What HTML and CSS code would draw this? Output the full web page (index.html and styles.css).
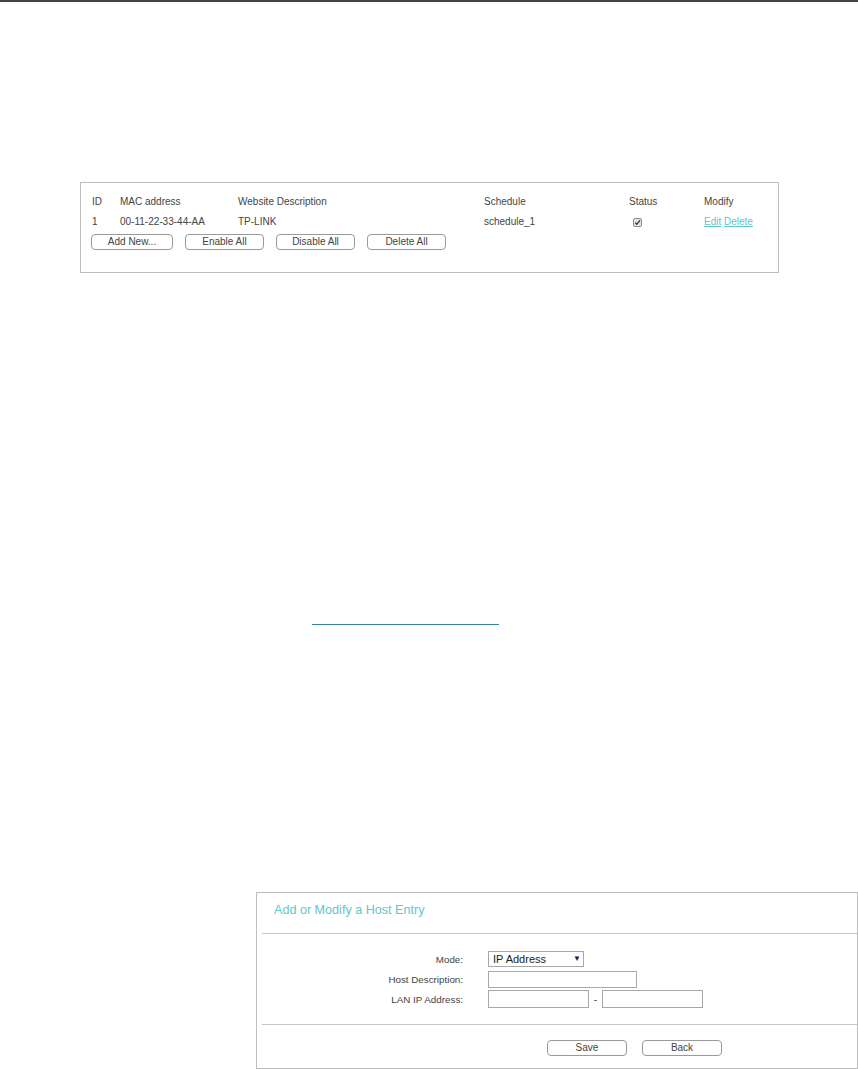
FILE: index.html
```html
<!DOCTYPE html>
<html lang="en">
<head>
    <meta charset="UTF-8">
    <meta name="viewport" content="width=device-width, initial-scale=1.0">
    <title>Access Control - Host</title>
    <link rel="stylesheet" href="styles.css">
</head>
<body>
    <div class="list-panel">
        <div class="list-grid">
            <div>ID</div>
            <div>MAC address</div>
            <div>Website Description</div>
            <div>Schedule</div>
            <div>Status</div>
            <div>Modify</div>

            <div>1</div>
            <div>00-11-22-33-44-AA</div>
            <div>TP-LINK</div>
            <div>schedule_1</div>
            <div class="status-cell">
                <svg class="check" width="9" height="9" viewBox="0 0 9 9">
                    <rect x="0.5" y="0.5" width="8" height="8" rx="1.5" fill="#e4e4e4" stroke="#8c8c8c"/>
                    <path d="M2.2 4.6 L3.8 6.3 L6.9 2.4" fill="none" stroke="#333" stroke-width="1.3"/>
                </svg>
            </div>
            <div class="modify-cell"><a href="#">Edit</a> <a href="#">Delete</a></div>
        </div>
        <div class="btn-row">
            <button class="btn">Add New...</button>
            <button class="btn">Enable All</button>
            <button class="btn">Disable All</button>
            <button class="btn">Delete All</button>
        </div>
    </div>

    <div class="ref-link"></div>

    <div class="host-panel">
        <div class="host-title">Add or Modify a Host Entry</div>
        <div class="host-divider"></div>
        <div class="host-form">
            <div class="form-row">
                <label class="form-label">Mode:</label>
                <div class="fake-select">IP Address<span class="arrow">&#9660;</span></div>
            </div>
            <div class="form-row">
                <label class="form-label">Host Description:</label>
                <input class="text-input wide" type="text">
            </div>
            <div class="form-row">
                <label class="form-label">LAN IP Address:</label>
                <input class="text-input ip" type="text">
                <span class="dash">-</span>
                <input class="text-input ip" type="text">
            </div>
        </div>
        <div class="host-divider"></div>
        <div class="host-actions">
            <button class="btn action">Save</button>
            <button class="btn action">Back</button>
        </div>
    </div>
</body>
</html>
```

FILE: styles.css
```css
:root {
    --text-color: #444;
    --teal: #62c6ca;
    --panel-border: #bdbdbd;
    --btn-border: #9a9a9a;
}

body {
    margin: 0;
    border-top: 2px solid #444;
    font-family: "Liberation Sans", Arial, sans-serif;
    font-size: 10px;
    color: var(--text-color);
    background: #fff;
}

/* host list panel */
.list-panel {
    box-sizing: border-box;
    margin: 180px 0 0 80px;
    width: 699px;
    height: 91px;
    border: 1px solid var(--panel-border);
    padding: 9px 0 0 11px;
}

.list-grid {
    display: grid;
    grid-template-columns: 28px 118px 246px 145px 75px auto;
    line-height: 20px;
}

.status-cell {
    display: flex;
    align-items: center;
    padding-left: 4px;
}

.check {
    display: block;
}

.modify-cell a {
    color: var(--teal);
    text-decoration: underline;
}

.btn-row {
    display: flex;
    gap: 12px;
    margin: 2px 0 0 -1px;
}

.btn {
    box-sizing: border-box;
    width: 79px;
    height: 16px;
    padding: 0;
    border: 1px solid var(--btn-border);
    border-radius: 4px;
    background: #fff;
    font-family: "Liberation Sans", Arial, sans-serif;
    font-size: 10px;
    color: var(--text-color);
    line-height: 14px;
    cursor: pointer;
}

.btn-row .btn:first-child {
    width: 82px;
}

/* stray link underline */
.ref-link {
    margin: 351px 0 0 312px;
    width: 187px;
    height: 1px;
    background: #35899b;
}

/* add / modify panel */
.host-panel {
    box-sizing: border-box;
    margin: 267px 0 0 256px;
    width: 602px;
    height: 177px;
    border: 1px solid var(--panel-border);
}

.host-title {
    padding: 7px 0 13px 17px;
    line-height: 20px;
    font-size: 12.6px;
    color: var(--teal);
}

.host-divider {
    margin-left: 5px;
    height: 1px;
    background: #c4c4c4;
}

.host-form {
    padding: 15px 0;
}

.form-row {
    display: flex;
    align-items: center;
    height: 20px;
}

.form-label {
    width: 206px;
    margin-right: 25px;
    text-align: right;
    font-size: 9.8px;
}

.fake-select {
    box-sizing: border-box;
    position: relative;
    width: 96px;
    height: 16px;
    padding-left: 4px;
    border: 1px solid #a8a8a8;
    font-family: "Liberation Sans Narrow", "Liberation Sans", Arial, sans-serif;
    font-size: 11px;
    line-height: 14px;
    color: #222;
}

.arrow {
    position: absolute;
    left: 84px;
    top: 0;
    font-size: 8px;
}

.text-input {
    box-sizing: border-box;
    height: 17px;
    margin: 0;
    padding: 0 3px;
    border: 1px solid #a8a8a8;
    font-size: 10px;
}

.text-input.wide {
    width: 149px;
}

.text-input.ip {
    width: 101px;
    height: 18px;
}

.dash {
    width: 13px;
    text-align: center;
    font-size: 10px;
}

.host-actions {
    display: flex;
    gap: 15px;
    padding: 15px 0 0 290px;
}

.btn.action {
    width: 80px;
}
```
